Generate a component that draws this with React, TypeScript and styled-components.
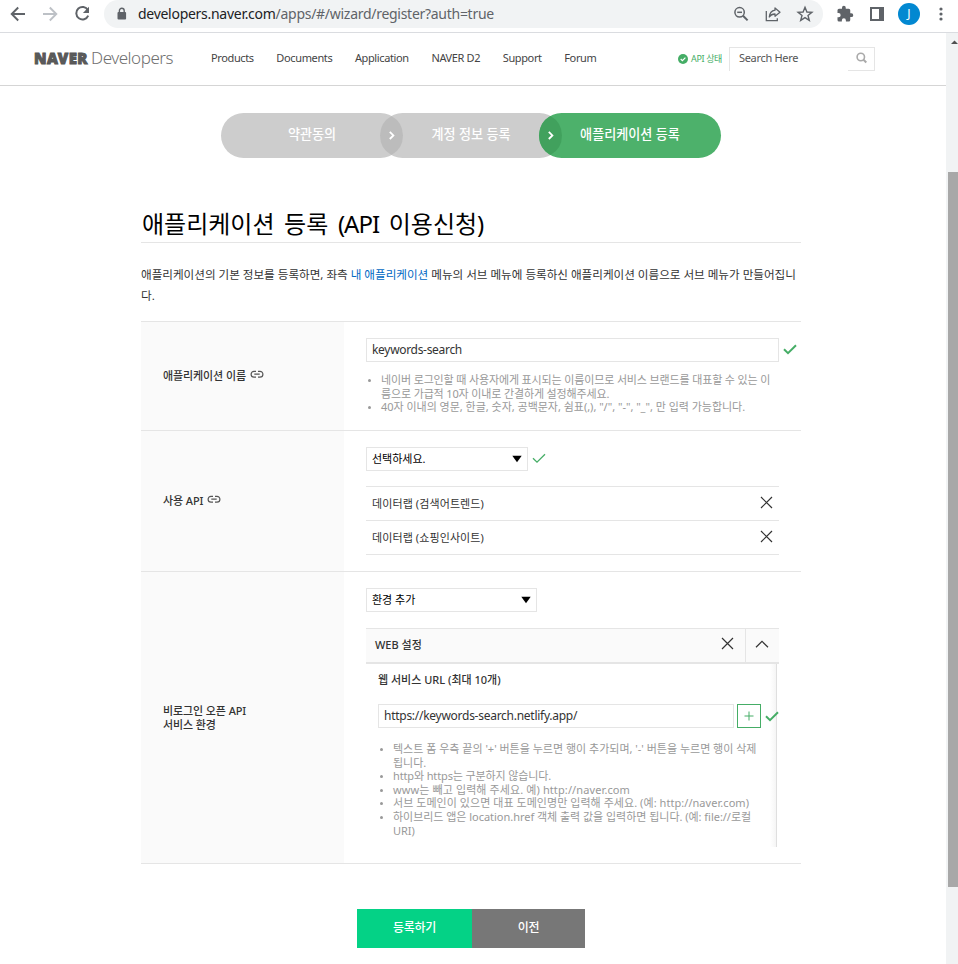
import React from 'react';
import styled, { createGlobalStyle } from 'styled-components';

const GlobalStyle = createGlobalStyle`
  *, *::before, *::after { box-sizing: border-box; }
  html, body { margin: 0; height: 964px; overflow: hidden; background: #fff; }
  body { font-family: "Noto Sans", "Noto Sans CJK KR", sans-serif; color: #333; font-size: 12px; }
  ul, h1, p { margin: 0; padding: 0; list-style: none; font-weight: 400; }
  button { border: 0; padding: 0; background: none; font-family: inherit; }
  svg { display: block; flex: none; }
`;

const Window = styled.div`
  width: 958px;
  height: 964px;
  display: flex;
  flex-direction: column;
`;

/* Browser toolbar */
const BrowserBar = styled.div`
  height: 33px;
  flex: none;
  display: flex;
  align-items: flex-start;
  border-bottom: 1px solid #dadce0;
`;
const NavButtons = styled.div`
  width: 104px;
  height: 28px;
  padding-left: 9px;
  display: flex;
  align-items: center;
  gap: 14px;
`;
const Omnibox = styled.div`
  width: 719px;
  height: 28px;
  padding: 0 9px 0 11px;
  display: flex;
  align-items: center;
  background: #f1f3f4;
  border-radius: 14px;
`;
const Url = styled.div`
  flex: 1;
  margin-left: 10px;
  font-size: 14px;
  line-height: 28px;
  letter-spacing: -0.28px;
  color: #5f6368;
  white-space: nowrap;
`;
const Host = styled.span`
  color: #202124;
`;
const OmniActions = styled.div`
  display: flex;
  gap: 14px;
`;
const BrowserActions = styled.div`
  height: 28px;
  flex: 1;
  padding-left: 13px;
  display: flex;
  align-items: center;
`;
const PanelIcon = styled.svg`
  margin-left: 16px;
`;
const Avatar = styled.div`
  width: 22px;
  height: 22px;
  margin: 0 19px 0 14px;
  border-radius: 50%;
  background: #0288d1;
  color: #fff;
  font: 12px/22px "Noto Sans", sans-serif;
  text-align: center;
`;

/* Page and scrollbar */
const Viewport = styled.div`
  flex: 1;
  display: flex;
`;
const Page = styled.div`
  width: 946px;
`;
const ScrollTrack = styled.div`
  width: 12px;
  background: #f1f3f4;
  padding: 7px 0 0 2px;
  display: flex;
  flex-direction: column;
`;
const ScrollThumb = styled.div`
  height: 715px;
  margin-top: 128px;
  background: #a8a8a8;
`;

/* Site header */
const Header = styled.header`
  height: 53px;
  padding-left: 33px;
  display: flex;
  border-bottom: 1px solid #d5d5d5;
`;
const Logo = styled.div`
  width: 178px;
  padding-left: 1px;
  display: flex;
  gap: 3px;
  line-height: 50px;
  color: #5b5b5b;
  white-space: nowrap;
`;
const LogoBold = styled.span`
  font-size: 15px;
  font-weight: 900;
  letter-spacing: 0.48px;
  -webkit-text-stroke: 0.9px #555;
`;
const LogoLight = styled.span`
  font-size: 17px;
  font-weight: 300;
  letter-spacing: -0.47px;
  color: #707070;
`;
const Menu = styled.nav`
  width: 466px;
  display: flex;
  gap: 22.6px;
`;
const MenuItem = styled.a`
  font-size: 11px;
  line-height: 50px;
  letter-spacing: -0.37px;
  color: #444;
  white-space: nowrap;
`;
const ApiStatus = styled.div`
  width: 52px;
  height: 51px;
  padding-left: 1px;
  display: flex;
  align-items: center;
  gap: 3px;
  font-size: 9px;
  letter-spacing: -0.35px;
  color: #45ad66;
  white-space: nowrap;
`;
const SearchBox = styled.div`
  width: 146px;
  height: 24px;
  margin-top: 14px;
  display: flex;
  border: 1px solid #e5e5e5;
  border-bottom: 0;
`;
const SearchText = styled.div`
  width: 118px;
  padding-left: 9px;
  font-size: 11px;
  line-height: 20px;
  letter-spacing: -0.32px;
  color: #555;
`;
const SearchButton = styled.button`
  flex: 1;
  height: 23px;
  padding: 4px 0 0 7px;
  display: flex;
  align-items: flex-start;
  border-bottom: 1px solid #e5e5e5;
`;

/* Content */
const Content = styled.main`
  width: 660px;
  margin-left: 141px;
`;
const Steps = styled.div`
  display: flex;
  padding: 27px 0 0 80px;
`;
const Step = styled.div<{ $active?: boolean }>`
  position: relative;
  width: 182px;
  height: 45px;
  border-radius: 22.5px;
  background: ${(p) => (p.$active ? '#4db16b' : '#cdcdcd')};
  color: #fff;
  font-size: 13.1px;
  font-weight: 500;
  line-height: 42px;
  text-align: center;
  white-space: nowrap;
  & + & { margin-left: -23px; }
`;
const Overlap = styled.svg`
  position: absolute;
  left: 0;
  top: 0;
`;
const Title = styled.h1`
  height: 85px;
  padding: 48px 0 0 1px;
  border-bottom: 1px solid #e5e5e5;
  font-size: 24px;
  line-height: 35px;
  word-spacing: 3.4px;
  color: #000;
  white-space: nowrap;
`;
const TitleLatin = styled.span`
  letter-spacing: -1px;
`;
const Intro = styled.p`
  padding-top: 21px;
  height: 78px;
  font-size: 11.6px;
  line-height: 21px;
  letter-spacing: -0.02px;
  white-space: nowrap;
`;
const Link = styled.a`
  color: #0068c3;
`;
const FormTable = styled.div`
  border-top: 1px solid #e5e5e5;
`;
const FormRow = styled.div<{ $height: number }>`
  height: ${(p) => p.$height}px;
  display: flex;
  border-bottom: 1px solid #e5e5e5;
`;
const Label = styled.div`
  width: 203px;
  padding-left: 22px;
  display: flex;
  align-items: center;
  gap: 4px;
  background: #fafafa;
  font-size: 11px;
  font-weight: 500;
  line-height: 14px;
  letter-spacing: -0.1px;
  white-space: pre-line;
  svg { margin-bottom: 4px; }
`;
const Field = styled.div`
  flex: 1;
  padding: 16px 0 0 22px;
`;
const Line = styled.div`
  display: flex;
  align-items: center;
  gap: 4px;
  > svg { margin-bottom: 2px; }
`;
const TextBox = styled.div<{ $width: number; $spacing: number }>`
  width: ${(p) => p.$width}px;
  height: 24px;
  padding-left: 5px;
  border: 1px solid #e5e5e5;
  font-size: 12px;
  line-height: 21px;
  letter-spacing: ${(p) => p.$spacing}px;
  white-space: nowrap;
`;
const SelectBox = styled.div<{ $width: number }>`
  width: ${(p) => p.$width}px;
  height: 24px;
  padding: 0 5px 1px;
  display: flex;
  align-items: center;
  justify-content: space-between;
  border: 1px solid #e5e5e5;
  color: #000;
  font-size: 11px;
  line-height: 21px;
`;
const Notes = styled.ul<{ $top: number }>`
  margin-top: ${(p) => p.$top}px;
  padding-left: 15px;
  font-size: 11px;
  line-height: 13.6px;
  color: #999;
  white-space: nowrap;
`;
const Note = styled.li<{ $spacing?: number }>`
  letter-spacing: ${(p) => p.$spacing ?? 0}px;
  &::before {
    content: "";
    float: left;
    width: 3px;
    height: 3px;
    margin: 6px 0 0 -13px;
    border-radius: 50%;
    background: #999;
  }
`;
const ApiList = styled.ul`
  width: 413px;
  margin-top: 15px;
  border-top: 1px solid #e5e5e5;
`;
const ApiItem = styled.li`
  height: 34px;
  padding: 0 6px 2px;
  display: flex;
  align-items: center;
  justify-content: space-between;
  border-bottom: 1px solid #e5e5e5;
  font-size: 11px;
  letter-spacing: 0.1px;
`;
const PanelHead = styled.div`
  width: 413px;
  height: 36px;
  margin-top: 16px;
  display: flex;
  background: #fafafa;
  border-top: 1px solid #e5e5e5;
  border-bottom: 2px solid #e5e5e5;
`;
const PanelTitle = styled.div`
  flex: 1;
  padding-left: 9px;
  font-size: 11px;
  font-weight: 500;
  line-height: 31px;
`;
const PanelButton = styled.button<{ $divided?: boolean }>`
  width: 34px;
  height: 33px;
  padding: 0 1px 4px 0;
  display: flex;
  align-items: center;
  justify-content: center;
  border-left: ${(p) => (p.$divided ? '1px solid #e5e5e5' : '0')};
`;
const PanelBody = styled.div`
  width: 411px;
  height: 183px;
  padding: 6px 0 0 12px;
  border-right: 1px solid #dfdfdf;
  background: linear-gradient(to right, transparent 404px, #f5f5f5 410px);
`;
const UrlLabel = styled.div`
  height: 34px;
  font-size: 11px;
  font-weight: 500;
  line-height: 19px;
`;
const UrlRow = styled.div`
  width: 402px;
  display: flex;
  align-items: center;
`;
const AddButton = styled.button`
  width: 24px;
  height: 24px;
  margin: 0 4px 0 3px;
  display: flex;
  align-items: center;
  justify-content: center;
  border: 1px solid #45ad66;
`;
const Actions = styled.div`
  display: flex;
  padding: 45px 0 0 216px;
`;
const ActionButton = styled.button<{ $primary?: boolean }>`
  width: ${(p) => (p.$primary ? 115 : 113)}px;
  height: 39px;
  padding-bottom: 3px;
  background: ${(p) => (p.$primary ? '#04d286' : '#777')};
  color: #fff;
  font-size: 12px;
  font-weight: 500;
  letter-spacing: -0.35px;
`;

const Check = ({ weight = 2 }: { weight?: number }) => (
  <svg width="14" height="11" viewBox="0 0 14 11" fill="none" stroke="#45ad66" strokeWidth={weight}>
    <path d="M1 5.3 5 9.2 13 1.3" />
  </svg>
);
const Cross = () => (
  <svg width="13" height="13" viewBox="0 0 13 13" stroke="#333" strokeWidth="1.2">
    <path d="M1 1 12 12M12 1 1 12" />
  </svg>
);
const Caret = () => (
  <svg width="10" height="8" viewBox="0 0 10 8">
    <path d="M.3 .7h9.4L5 7.3z" fill="#000" />
  </svg>
);
const ChainLink = () => (
  <svg width="14" height="9" viewBox="0 0 14 9" fill="none" stroke="#555" strokeWidth="1.2">
    <path d="M6 1.300H4a2.900 2.900 0 0 0 0 5.800H6M8 1.300h2a2.900 2.900 0 0 1 0 5.800H8M4.300 4.200h5.400" />
  </svg>
);

const StepOverlap = ({ color }: { color: string }) => (
  <Overlap width="23" height="45" viewBox="0 0 23 45">
    <path d="M11.5 2.900A22.5 22.5 0 0 1 11.5 42.100A22.5 22.5 0 0 1 11.5 2.900Z" fill={color} />
    <path d="M9.800 18.800 13.400 22.400 9.800 26" fill="none" stroke="#fff" strokeWidth="1.8" />
  </Overlap>
);

const menu = ['Products', 'Documents', 'Application', 'NAVER D2', 'Support', 'Forum'];

export default function App() {
  return (
    <Window>
      <GlobalStyle />
      <BrowserBar>
        <NavButtons>
          <svg width="18" height="18" viewBox="0 0 18 18" fill="none" stroke="#5f6368" strokeWidth="1.9">
            <path d="M16 9H3M9.2 2.5 2.7 9l6.5 6.5" />
          </svg>
          <svg width="18" height="18" viewBox="0 0 18 18" fill="none" stroke="#bdc1c6" strokeWidth="1.9">
            <path d="M2 9h13M8.8 2.5 15.3 9l-6.5 6.5" />
          </svg>
          <svg width="18" height="18" viewBox="0 0 18 18" fill="none" stroke="#5f6368" strokeWidth="2">
            <path d="M14.9 5.2A6.2 6.2 0 1 0 15.2 10.6" />
            <path d="M16 1.8v6.1H9.9z" fill="#5f6368" stroke="none" />
          </svg>
        </NavButtons>
        <Omnibox>
          <svg width="13" height="14" viewBox="0 0 13 14">
            <rect x="2.5" y="5" width="8.6" height="7.6" rx="1" fill="#5f6368" />
            <path d="M4.4 5.5V3.7a2.4 2.4 0 0 1 4.8 0v1.8" fill="none" stroke="#5f6368" strokeWidth="1.4" />
          </svg>
          <Url>
            <Host>developers.naver.com</Host>/apps/#/wizard/register?auth=true
          </Url>
          <OmniActions>
            <svg width="18" height="18" viewBox="0 0 18 18" fill="none" stroke="#5f6368" strokeWidth="1.5">
              <circle cx="7.6" cy="7.3" r="4.7" />
              <path d="M11 10.8l4.6 4.6" strokeWidth="2" />
              <path d="M5.2 7.3H10" />
            </svg>
            <svg width="18" height="18" viewBox="0 0 18 18" fill="none" stroke="#5f6368" strokeWidth="1.3">
              <path d="M2.3 6v9.700h11v-2.500" />
              <path d="M11 3 16 7.200l-5 4V9C8.400 9 6.500 9.900 5.300 12c.3-3.500 2.200-6.200 5.700-6.800z" strokeLinejoin="round" />
            </svg>
            <svg width="18" height="18" viewBox="0 0 18 18" fill="none" stroke="#5f6368" strokeWidth="1.4">
              <path d="M9 2.3 10.900 7l5 .3-3.900 3.200 1.300 4.900L9 12.700l-4.300 2.700L6 10.500 2.100 7.300l5-.3z" />
            </svg>
          </OmniActions>
        </Omnibox>
        <BrowserActions>
          <svg width="18" height="18" viewBox="0 0 24 24" fill="#5f6368">
            <path d="M20.500 11H19V7a2 2 0 0 0-2-2h-4V3.500a2.500 2.500 0 0 0-5 0V5H4a2 2 0 0 0-2 2v3.800h1.500a2.700 2.700 0 0 1 0 5.400H2V20a2 2 0 0 0 2 2h3.800v-1.500a2.700 2.700 0 0 1 5.400 0V22H17a2 2 0 0 0 2-2v-4h1.500a2.500 2.500 0 0 0 0-5z" />
          </svg>
          <PanelIcon width="14" height="14" viewBox="0 0 14 14">
            <path d="M0 0h14v14H0z" fill="#5f6368" />
            <path d="M2 2h7v10H2z" fill="#fff" />
          </PanelIcon>
          <Avatar>J</Avatar>
          <svg width="4" height="16" viewBox="0 0 4 16" fill="#5f6368">
            <circle cx="2" cy="3" r="1.6" />
            <circle cx="2" cy="8" r="1.6" />
            <circle cx="2" cy="13" r="1.6" />
          </svg>
        </BrowserActions>
      </BrowserBar>

      <Viewport>
        <Page>
          <Header>
            <Logo>
              <LogoBold>NAVER</LogoBold>
              <LogoLight>Developers</LogoLight>
            </Logo>
            <Menu>
              {menu.map((item) => (
                <MenuItem key={item}>{item}</MenuItem>
              ))}
            </Menu>
            <ApiStatus>
              <svg width="10" height="10" viewBox="0 0 10 10">
                <circle cx="5" cy="5" r="5" fill="#45ad66" />
                <path d="M2.7 5 4.4 6.6 7.4 3.6" fill="none" stroke="#fff" strokeWidth="1.2" />
              </svg>
              <span>API 상태</span>
            </ApiStatus>
            <SearchBox>
              <SearchText>Search Here</SearchText>
              <SearchButton>
                <svg width="13" height="13" viewBox="0 0 13 13" fill="none" stroke="#aaa" strokeWidth="1.6">
                  <circle cx="5.8" cy="5" r="3.7" />
                  <path d="M8.5 7.7 11.3 10.5" strokeWidth="2" />
                </svg>
              </SearchButton>
            </SearchBox>
          </Header>

          <Content>
            <Steps>
              <Step>약관동의</Step>
              <Step>
                <StepOverlap color="#bcbcbc" />
                계정 정보 등록
              </Step>
              <Step $active>
                <StepOverlap color="#41a15d" />
                애플리케이션 등록
              </Step>
            </Steps>

            <Title>
              애플리케이션 등록 <TitleLatin>(API</TitleLatin> 이용신청)
            </Title>
            <Intro>
              애플리케이션의 기본 정보를 등록하면, 좌측 <Link>내 애플리케이션</Link> 메뉴의 서브 메뉴에 등록하신
              애플리케이션 이름으로 서브 메뉴가 만들어집니
              <br />
              다.
            </Intro>

            <FormTable>
              <FormRow $height={109}>
                <Label>
                  애플리케이션 이름
                  <ChainLink />
                </Label>
                <Field>
                  <Line>
                    <TextBox $width={413} $spacing={-0.31}>keywords-search</TextBox>
                    <Check />
                  </Line>
                  <Notes $top={11}>
                    <Note $spacing={-0.14}>
                      네이버 로그인할 때 사용자에게 표시되는 이름이므로 서비스 브랜드를 대표할 수 있는 이
                      <br />
                      름으로 가급적 10자 이내로 간결하게 설정해주세요.
                    </Note>
                    <Note $spacing={-0.02}>
                      40자 이내의 영문, 한글, 숫자, 공백문자, 쉼표(,), "/", "-", "_", 만 입력 가능합니다.
                    </Note>
                  </Notes>
                </Field>
              </FormRow>

              <FormRow $height={141}>
                <Label>
                  사용 API
                  <ChainLink />
                </Label>
                <Field>
                  <Line>
                    <SelectBox $width={162}>
                      선택하세요.
                      <Caret />
                    </SelectBox>
                    <Check weight={1.3} />
                  </Line>
                  <ApiList>
                    {['데이터랩 (검색어트렌드)', '데이터랩 (쇼핑인사이트)'].map((name) => (
                      <ApiItem key={name}>
                        {name}
                        <Cross />
                      </ApiItem>
                    ))}
                  </ApiList>
                </Field>
              </FormRow>

              <FormRow $height={292}>
                <Label>{'비로그인 오픈 API\n서비스 환경'}</Label>
                <Field>
                  <SelectBox $width={171}>
                    환경 추가
                    <Caret />
                  </SelectBox>
                  <PanelHead>
                    <PanelTitle>WEB 설정</PanelTitle>
                    <PanelButton>
                      <Cross />
                    </PanelButton>
                    <PanelButton $divided>
                      <svg width="14" height="8" viewBox="0 0 14 8" fill="none" stroke="#333" strokeWidth="1.2">
                        <path d="M1 7.2 7 1.3 13 7.2" />
                      </svg>
                    </PanelButton>
                  </PanelHead>
                  <PanelBody>
                    <UrlLabel>웹 서비스 URL (최대 10개)</UrlLabel>
                    <UrlRow>
                      <TextBox $width={356} $spacing={-0.27}>https://keywords-search.netlify.app/</TextBox>
                      <AddButton>
                        <svg width="10" height="10" viewBox="0 0 10 10" stroke="#45ad66">
                          <path d="M5 .5v9M.5 5h9" />
                        </svg>
                      </AddButton>
                      <Check />
                    </UrlRow>
                    <Notes $top={14}>
                      <Note>
                        텍스트 폼 우측 끝의 '+' 버튼을 누르면 행이 추가되며, '-' 버튼을 누르면 행이 삭제
                        <br />
                        됩니다.
                      </Note>
                      <Note $spacing={-0.13}>http와 https는 구분하지 않습니다.</Note>
                      <Note $spacing={0.11}>www는 빼고 입력해 주세요. 예) http://naver.com</Note>
                      <Note $spacing={0.05}>
                        서브 도메인이 있으면 대표 도메인명만 입력해 주세요. (예: http://naver.com)
                      </Note>
                      <Note $spacing={-0.03}>
                        하이브리드 앱은 location.href 객체 출력 값을 입력하면 됩니다. (예: file://로컬
                        <br />
                        URI)
                      </Note>
                    </Notes>
                  </PanelBody>
                </Field>
              </FormRow>
            </FormTable>

            <Actions>
              <ActionButton $primary>등록하기</ActionButton>
              <ActionButton>이전</ActionButton>
            </Actions>
          </Content>
        </Page>
        <ScrollTrack>
          <svg width="10" height="4" viewBox="0 0 10 4">
            <path d="M3 4 6.5 .5 10 4z" fill="#505050" />
          </svg>
          <ScrollThumb />
        </ScrollTrack>
      </Viewport>
    </Window>
  );
}
